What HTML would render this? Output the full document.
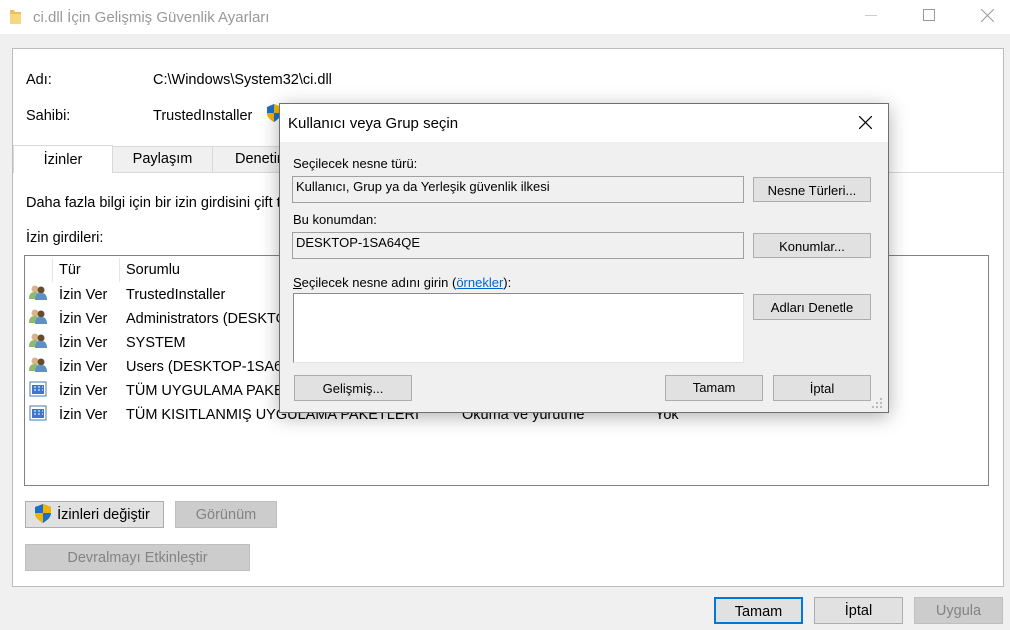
<!DOCTYPE html>
<html><head><meta charset="utf-8"><style>
*{margin:0;padding:0;box-sizing:border-box}
body{width:1010px;height:630px;background:#f0f0f0;font-family:"Liberation Sans",sans-serif;font-size:14.5px;color:#000;position:relative;overflow:hidden}
.a{position:absolute;white-space:nowrap}
.btn{position:absolute;background:#e1e1e1;border:1px solid #adadad;text-align:center;font-size:14.5px}
.dis{background:#cccccc;border-color:#bfbfbf;color:#838383}
.def{border:2px solid #0078d7}
.d{font-size:13px}
.dbtn{position:absolute;background:#e1e1e1;border:1px solid #adadad;text-align:center;font-size:13px;line-height:25px}
</style></head><body>
<div class="a" style="left:0;top:0;width:1010px;height:34px;background:#fff"></div>
<svg class="a" style="left:9px;top:8px" width="14" height="17"><path d="M1 2h4l1 2h6v12H1z" fill="#e8c25a"/><path d="M1 6h11v10H1z" fill="#f5d77e"/></svg>
<div class="a" style="left:33px;top:9px;font-size:15px;color:#999">ci.dll İçin Gelişmiş Güvenlik Ayarları</div>
<div class="a" style="left:865px;top:15px;width:12px;height:1px;background:#ccc"></div>
<div class="a" style="left:923px;top:9px;width:12px;height:12px;border:1px solid #999"></div>
<svg class="a" style="left:981px;top:9px" width="13" height="13"><path d="M0 0L13 13M13 0L0 13" stroke="#999" stroke-width="1"/></svg>

<div class="a" style="left:12px;top:48px;width:992px;height:539px;background:#fff;border:1px solid #bcbcbc"></div>
<div class="a" style="left:26px;top:72px">Adı:</div>
<div class="a" style="left:153px;top:72px">C:\Windows\System32\ci.dll</div>
<div class="a" style="left:26px;top:108px">Sahibi:</div>
<div class="a" style="left:153px;top:108px">TrustedInstaller</div>
<svg class="a" style="left:267px;top:104px" width="14" height="18"><path d="M7 0L14 3V9C14 13 10 16 7 18C4 16 0 13 0 9V3Z" fill="#1a6fc8"/><path d="M7 0L14 3V9H7Z" fill="#f0b400"/><path d="M0 9H7V18C4 16 0 13 0 9Z" fill="#f0b400"/></svg>
<div class="a" style="left:13px;top:172px;width:990px;height:414px;border-top:1px solid #d9d9d9;background:#fff"></div>
<div class="a" style="left:13px;top:145px;width:100px;height:28px;background:#fff;border:1px solid #d9d9d9;border-bottom:none;text-align:center;line-height:28px">İzinler</div>
<div class="a" style="left:112px;top:146px;width:101px;height:26px;background:#f0f0f0;border:1px solid #d9d9d9;border-bottom:none;text-align:center;line-height:24px">Paylaşım</div>
<div class="a" style="left:212px;top:146px;width:100px;height:26px;background:#f0f0f0;border:1px solid #d9d9d9;border-bottom:none;padding-left:22px;line-height:24px">Denetim</div>
<div class="a" style="left:26px;top:195px">Daha fazla bilgi için bir izin girdisini çift tıklatın. Bir izin girdisini değiştirmek için girdiyi seçin ve Düzenle'yi tıklatın (varsa).</div>
<div class="a" style="left:26px;top:230px">İzin girdileri:</div>
<div class="a" style="left:24px;top:255px;width:965px;height:231px;border:1px solid #828282;background:#fff"></div>
<div class="a" style="left:52px;top:258px;width:1px;height:24px;background:#e5e5e5"></div>
<div class="a" style="left:119px;top:258px;width:1px;height:24px;background:#e5e5e5"></div>
<div class="a" style="left:59px;top:262px">Tür</div>
<div class="a" style="left:126px;top:262px">Sorumlu</div>
<svg class="a" style="left:29px;top:284px" width="20" height="144">
<g id="u"><circle cx="6" cy="5" r="3.5" fill="#d9b48a"/><path d="M0 15c0-5 2-7 6-7s6 2 6 7z" fill="#8cb870"/><circle cx="12" cy="6" r="3.5" fill="#6b4a30"/><path d="M6 16c0-5 2-7 6-7s6 2 6 7z" fill="#5d8fc8"/></g>
<use href="#u" y="24"/><use href="#u" y="48"/><use href="#u" y="72"/>
<g transform="translate(0,96)"><rect x="1" y="2" width="16" height="14" fill="#fff" stroke="#4a7ab8"/><rect x="3" y="5" width="12" height="9" fill="#3d78c8"/><path d="M5 7h2M9 7h2M13 7h1M5 10h2M9 10h2M13 10h1" stroke="#fff"/></g>
<g transform="translate(0,120)"><rect x="1" y="2" width="16" height="14" fill="#fff" stroke="#4a7ab8"/><rect x="3" y="5" width="12" height="9" fill="#3d78c8"/><path d="M5 7h2M9 7h2M13 7h1M5 10h2M9 10h2M13 10h1" stroke="#fff"/></g>
</svg>
<div class="a" style="left:59px;top:283px;line-height:24px">İzin Ver<br>İzin Ver<br>İzin Ver<br>İzin Ver<br>İzin Ver<br>İzin Ver</div>
<div class="a" style="left:126px;top:283px;line-height:24px">TrustedInstaller<br>Administrators (DESKTOP-1SA64QE\Administrators)<br>SYSTEM<br>Users (DESKTOP-1SA64QE\Users)<br>TÜM UYGULAMA PAKETLERİ<br>TÜM KISITLANMIŞ UYGULAMA PAKETLERİ</div>
<div class="a" style="left:462px;top:403px;line-height:24px">Okuma ve yürütme</div>
<div class="a" style="left:655px;top:403px;line-height:24px">Yok</div>
<div class="btn" style="left:25px;top:501px;width:139px;height:27px;line-height:27px;padding-left:18px">İzinleri değiştir</div>
<svg class="a" style="left:35px;top:504px" width="16" height="19"><path d="M8 0L16 3V9C16 14 11 17 8 19C5 17 0 14 0 9V3Z" fill="#1a6fc8"/><path d="M8 0L16 3V9H8Z" fill="#f0b400"/><path d="M0 9H8V19C5 17 0 14 0 9Z" fill="#f0b400"/></svg>
<div class="btn dis" style="left:175px;top:501px;width:102px;height:27px;line-height:27px">Görünüm</div>
<div class="btn dis" style="left:25px;top:544px;width:225px;height:27px;line-height:27px">Devralmayı Etkinleştir</div>
<div class="btn def" style="left:714px;top:597px;width:89px;height:27px;line-height:26px">Tamam</div>
<div class="btn" style="left:814px;top:597px;width:89px;height:27px;line-height:27px">İptal</div>
<div class="btn dis" style="left:914px;top:597px;width:89px;height:27px;line-height:27px">Uygula</div>

<div class="a" style="left:279px;top:103px;width:610px;height:310px;background:#f0f0f0;border:1px solid #6f6f6f;box-shadow:0 4px 18px rgba(0,0,0,0.3)">
 <div class="a" style="left:0;top:0;width:608px;height:38px;background:#fff"></div>
</div>
<div class="a" style="left:288px;top:115px;font-size:15px">Kullanıcı veya Grup seçin</div>
<svg class="a" style="left:859px;top:116px" width="13" height="13"><path d="M0 0L13 13M13 0L0 13" stroke="#000" stroke-width="1.2"/></svg>
<div class="a d" style="left:293px;top:156px">Seçilecek nesne türü:</div>
<div class="a d" style="left:292px;top:176px;width:452px;height:27px;border:1px solid #a0a0a0;padding:2px 0 0 3px">Kullanıcı, Grup ya da Yerleşik güvenlik ilkesi</div>
<div class="dbtn" style="left:753px;top:177px;width:118px;height:25px">Nesne Türleri...</div>
<div class="a d" style="left:293px;top:212px">Bu konumdan:</div>
<div class="a d" style="left:292px;top:232px;width:452px;height:27px;border:1px solid #a0a0a0;padding:2px 0 0 3px">DESKTOP-1SA64QE</div>
<div class="dbtn" style="left:753px;top:233px;width:118px;height:25px">Konumlar...</div>
<div class="a d" style="left:293px;top:275px"><u>S</u>eçilecek nesne adını girin (<span style="color:#0066cc;text-decoration:underline">örnekler</span>):</div>
<div class="a" style="left:293px;top:293px;width:451px;height:70px;background:#fff;border:1px solid #a0a0a0;border-color:#8a8a8a #e3e3e3 #e3e3e3 #8a8a8a"></div>
<div class="dbtn" style="left:753px;top:294px;width:118px;height:26px">Adları Denetle</div>
<div class="dbtn" style="left:294px;top:375px;width:118px;height:26px">Gelişmiş...</div>
<div class="dbtn def" style="left:665px;top:375px;width:98px;height:26px;line-height:24px">Tamam</div>
<div class="dbtn" style="left:773px;top:375px;width:98px;height:26px">İptal</div>
<svg class="a" style="left:872px;top:398px" width="12" height="12"><g fill="#bbb"><rect x="8" y="0" width="2" height="2"/><rect x="4" y="4" width="2" height="2"/><rect x="8" y="4" width="2" height="2"/><rect x="0" y="8" width="2" height="2"/><rect x="4" y="8" width="2" height="2"/><rect x="8" y="8" width="2" height="2"/></g></svg>
</body></html>
